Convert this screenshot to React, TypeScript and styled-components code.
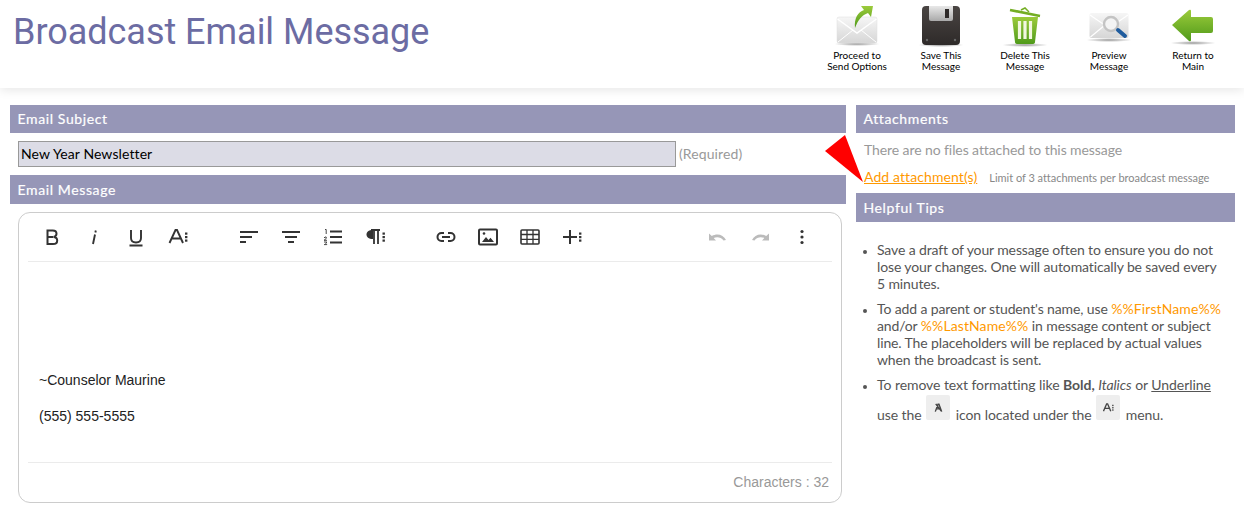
import React from "react";
import styled, { createGlobalStyle } from "styled-components";

const Global = createGlobalStyle`
  html, body { margin: 0; padding: 0; background: #fff; }
  body { font-family: "Lato", "Liberation Sans", sans-serif; }
  #root { height: 528px; overflow: hidden; }
`;
const Page = styled.div`position: relative; width: 1244px; height: 528px; overflow: hidden; background: #fff;`;
const Header = styled.header`
  height: 88px; display: flex; justify-content: space-between; align-items: flex-start;
  box-shadow: 0 2px 10px rgba(0,0,0,.1); padding-left: 13px; padding-right: 9px; box-sizing: border-box;
`;
const Title = styled.h1`
  margin: 9px 0 0; font: 400 36px/46px "Roboto", sans-serif; color: #6c6ca3; letter-spacing: -.03px;
`;
const Actions = styled.nav`display: flex; margin-top: 4px;`;
const Action = styled.div`
  width: 84px; display: flex; flex-direction: column; align-items: center;
  font-size: 10px; line-height: 11px; color: #000; text-align: center; white-space: pre-line;
  svg { display: block; width: 48px; height: 44px; margin-bottom: 2px; }
`;
const Columns = styled.main`
  display: grid; grid-template-columns: 836px 379px; column-gap: 10px; padding: 17px 0 0 10px;
`;
const Column = styled.section`display: flex; flex-direction: column;`;
const Bar = styled.h2<{ $h?: number }>`
  margin: 0; height: ${(p) => p.$h ?? 28}px; line-height: ${(p) => p.$h ?? 28}px;
  background: #9696b7; color: #fff; padding-left: 7.5px; font-size: 14px; font-weight: 400; letter-spacing: .62px;
  -webkit-text-stroke: .2px #fff;
`;
const SubjectRow = styled.div`display: flex; align-items: center; padding: 8px 0 8px 8px; gap: 3px;`;
const SubjectInput = styled.div`
  box-sizing: border-box; width: 658px; height: 26px; line-height: 24px; padding-left: 2px;
  background: #dcdce6; border: 1px solid #999; font-size: 14px; letter-spacing: .1px; color: #000;
`;
const Hint = styled.span`font-size: 14px; color: #999; letter-spacing: .1px; position: relative; top: -1px;`;
const Editor = styled.div`
  box-sizing: border-box; margin: 8px 4px 0 8px; height: 291px; border: 1px solid #ccc; border-radius: 12px;
  display: flex; flex-direction: column; background: #fff;
`;
const Toolbar = styled.div`
  box-sizing: border-box; height: 49px; margin: 0 9px; padding: 0 9px 0 3px; border-bottom: 1px solid #ebebeb;
  display: flex; align-items: center;
`;
const Group = styled.div`display: flex; margin-right: 29px; &:last-child { margin: 0 0 0 auto; }`;
const Tool = styled.span`
  width: 42px; height: 48px; display: flex; align-items: center; justify-content: center;
  svg { width: 24px; height: 24px; display: block; }
`;
const Body = styled.div`
  flex: 1; padding: 108px 20px 0; font: 14px/20px "Liberation Sans", Arial, sans-serif; color: #222;
  p { margin: 0 0 16px; }
`;
const Status = styled.div`
  box-sizing: border-box; height: 40px; margin: 0 9px; padding: 0 3px 2px 0; border-top: 1px solid #ebebeb;
  display: flex; align-items: center; justify-content: flex-end;
  font: 14px "Liberation Sans", Arial, sans-serif; color: #999;
`;
const Muted = styled.div`font-size: 14px; line-height: 17px; color: #999; padding: 8px 0 0 8px; letter-spacing: -.09px;`;
const LinkRow = styled.div`display: flex; align-items: baseline; padding: 10px 0 8px 8px;`;
const AddLink = styled.a`font-size: 14px; line-height: 17px; color: #f90; text-decoration: underline; letter-spacing: .1px;`;
const Limit = styled.span`font-size: 11px; color: #888; margin-left: 12px; letter-spacing: -.02px;`;
const Tips = styled.ul`
  margin: 0; padding: 19px 13px 0 21px; font-size: 14px; line-height: 17px; color: #555; letter-spacing: -.125px;
  li { margin-bottom: 8px; }
  li:last-child { letter-spacing: -.06px; }
  li::marker { font-size: 11px; }
  em.ph { font-style: normal; color: #f90; letter-spacing: .1px; }
  b { font-weight: 700; }
  u { text-decoration: underline; }
`;
const KeyIcon = styled.span`
  display: inline-flex; align-items: center; justify-content: center; width: 24px; height: 25px;
  margin: 0 2px 0 1px; background: #eee; border-radius: 2px; vertical-align: 7px;
  svg { width: 11px; height: 11px; }
`;
const LastLine = styled.span`display: block; margin-top: 2px;`;
const Pointer = styled.svg`position: absolute; left: 820px; top: 130px; width: 50px; height: 56px;`;

const I = { fill: "none", stroke: "#333", strokeWidth: 1.6 } as const;
const Dots = ({ x, c = "#333" }: { x: number; c?: string }) => (
  <g fill={c}>
    <rect x={x} y="7.500" width="2.400" height="2.200" /><rect x={x} y="11" width="2.400" height="2.200" /><rect x={x} y="14.500" width="2.400" height="2.200" />
  </g>
);
const Ic = ({ children }: { children: React.ReactNode }) => <Tool><svg viewBox="0 0 24 24">{children}</svg></Tool>;

const SmallA = ({ strike }: { strike?: boolean }) => (
  <svg viewBox="0 0 24 24">
    <path d={strike ? "M5 21 11 5h2l6 16M8 15h8M6 4l12 16" : "M1 20 8 4h2l7 16M4 14h10"} fill="none" stroke="#444" strokeWidth="3" />
    {!strike && <g fill="#444"><rect x="20" y="6" width="3" height="3" /><rect x="20" y="11" width="3" height="3" /><rect x="20" y="16" width="3" height="3" /></g>}
  </svg>
);

const Defs = () => (
  <svg width="0" height="0" style={{ position: "absolute" }}>
    <defs>
      <linearGradient id="env" x1="0" y1="0" x2="0" y2="1"><stop offset="0" stopColor="#f6f6f6" /><stop offset="1" stopColor="#d6d6d6" /></linearGradient>
      <linearGradient id="grn" x1="0" y1="0" x2="0" y2="1"><stop offset="0" stopColor="#9ccb3b" /><stop offset="1" stopColor="#4f9a1a" /></linearGradient>
      <linearGradient id="disk" x1="0" y1="0" x2="0" y2="1"><stop offset="0" stopColor="#4a4543" /><stop offset="1" stopColor="#2e2a29" /></linearGradient>
      <linearGradient id="shut" x1="0" y1="0" x2="0" y2="1"><stop offset="0" stopColor="#e8e8e8" /><stop offset="1" stopColor="#a9a9a9" /></linearGradient>
      <radialGradient id="shd"><stop offset="0" stopColor="#999" /><stop offset="1" stopColor="#999" stopOpacity="0" /></radialGradient>
    </defs>
  </svg>
);
const Shadow = ({ y = 41 }: { y?: number }) => <ellipse cx="24" cy={y} rx="23" ry="2" fill="url(#shd)" />;
const Envelope = () => (
  <g>
    <path d="M4 15Q4 13 6 13H42Q44 13 44 15V37Q44 39 42 39H6Q4 39 4 37Z" fill="url(#env)" stroke="#ddd" strokeWidth=".5" />
    <path d="M4.500 15 24 29 43.500 15" fill="none" stroke="#fff" strokeWidth="1.500" />
    <path d="M5 38 20 26M43 38 28 26" fill="none" stroke="#fff" strokeWidth="1" />
  </g>
);

export default function App() {
  return (
    <Page>
      <Global />
      <Defs />
      <Header>
        <Title>Broadcast Email Message</Title>
        <Actions>
          <Action>
            <svg viewBox="0 0 48 44"><Shadow y={40} /><Envelope />
              <path d="M22 24C21 14 25 8 31 6L28 2 40 2 38 13 35 9C29 11 25 16 22 24Z" fill="url(#grn)" /></svg>
            {"Proceed to\nSend Options"}
          </Action>
          <Action>
            <svg viewBox="0 0 48 44"><Shadow />
              <rect x="5" y="2" width="38" height="39" rx="4" fill="url(#disk)" />
              <path d="M12 2H36V15Q36 17 34 17H14Q12 17 12 15Z" fill="url(#shut)" />
              <rect x="28" y="5" width="4" height="9" fill="#2e2a29" />
              <circle cx="10" cy="36" r="1.200" fill="#666" /><circle cx="38" cy="36" r="1.200" fill="#666" /></svg>
            {"Save This\nMessage"}
          </Action>
          <Action>
            <svg viewBox="0 0 48 44"><Shadow />
              <path d="M11 13H37L34 38Q34 40 31 40H17Q14 40 14 38Z" fill="url(#grn)" />
              <path d="M18.500 17V35M24 17V35M29.500 17V35" stroke="#f2f7e0" strokeWidth="3.200" />
              <path d="M9 6 39 12" stroke="#74ae24" strokeWidth="2.600" />
              <path d="M20 6 24 4 28 8" fill="none" stroke="#74ae24" strokeWidth="1.500" /></svg>
            {"Delete This\nMessage"}
          </Action>
          <Action>
            <svg viewBox="0 0 48 44"><Shadow y={36} />
              <path d="M4.500 11Q4.500 9 6.500 9H41.500Q43.500 9 43.500 11V32Q43.500 34 41.500 34H6.500Q4.500 34 4.500 32Z" fill="url(#env)" />
              <path d="M5 11 24 24 43 11M5.500 33 20 21" fill="none" stroke="#fff" strokeWidth="1.200" />
              <circle cx="26" cy="20" r="7" fill="#f4f4f4" stroke="#c4c4c4" strokeWidth="2.400" />
              <path d="M33 26 40 32" stroke="#1f5c9e" strokeWidth="4" strokeLinecap="round" /></svg>
            {"Preview\nMessage"}
          </Action>
          <Action>
            <svg viewBox="0 0 48 44"><Shadow y={39} />
              <path d="M3 21 20 6Q22 5 22 7V13H42Q44 13 44 15V27Q44 29 42 29H22V36Q22 38 20 37Z" fill="url(#grn)" /></svg>
            {"Return to\nMain"}
          </Action>
        </Actions>
      </Header>
      <Columns>
        <Column>
          <Bar>Email Subject</Bar>
          <SubjectRow>
            <SubjectInput>New Year Newsletter</SubjectInput>
            <Hint>(Required)</Hint>
          </SubjectRow>
          <Bar $h={29}>Email Message</Bar>
          <Editor>
            <Toolbar>
              <Group>
                <Ic><path d="M7.500 5.500h5.300c2.200 0 3.700 1.300 3.700 3.300 0 1.600-1 2.800-3 3.100 2.300.2 3.700 1.500 3.700 3.500 0 2.200-1.700 3.600-4.200 3.600H7.500ZM7.500 12h5.500" {...I} strokeWidth={2} /></Ic>
                <Ic><path d="M13 9.500 11 19M13.800 5.500l-.4 2" {...I} strokeWidth={1.900} /></Ic>
                <Ic><path d="M7 5v8c0 3 2 4.500 5 4.500s5-1.500 5-4.500V5M5.500 20.500h13" {...I} strokeWidth={1.900} /></Ic>
                <Ic><path d="M3.500 18 9.500 5h1.500l6 13M5.800 13.500h9" {...I} strokeWidth={1.900} /><Dots x={19} /></Ic>
              </Group>
              <Group>
                <Ic><path d="M3 7h18M3 12h12M3 17h6" {...I} strokeWidth={2} /></Ic>
                <Ic><path d="M3 7h18M6 12h12M9 17h6" {...I} strokeWidth={2} /></Ic>
                <Ic><path d="M9 6.500h12M9 12h12M9 17.500h12" {...I} strokeWidth={2} /><path d="M4 4.500h1.200V9M3 13l1-1h1.200v1.500L3 15.300h3M3 17h2.800l-1 1.300 1 1.300H3" {...I} strokeWidth={.9} /></Ic>
                <Ic><path d="M8 5H17M11 5v14M15 5v14" {...I} strokeWidth={1.800} /><path d="M10 5C5.500 5 3.500 7 3.500 9.500s2 4.500 6.500 4.500Z" fill="#333" /><Dots x={19.500} /></Ic>
              </Group>
              <Group>
                <Ic><path d="M10 8H7.500a4 4 0 0 0 0 8H10M14 8h2.500a4 4 0 0 1 0 8H14M8 12h8" {...I} strokeWidth={2} /></Ic>
                <Ic><rect x="3" y="4.500" width="18" height="15" rx="1" {...I} strokeWidth={2} /><path d="M6 17l4-5 2.500 3 2-2.300L18 17Z" fill="#333" /><circle cx="8" cy="8.500" r="1.300" fill="#333" /></Ic>
                <Ic><rect x="3" y="5" width="18" height="14" rx="1" {...I} strokeWidth={1.600} /><path d="M3 9.500h18M3 14.300h18M9 5v14M15 5v14" {...I} strokeWidth={1.300} /></Ic>
                <Ic><path d="M3 12h14M10 5v14" {...I} strokeWidth={2} /><Dots x={19} /></Ic>
              </Group>
              <Group>
                <Ic><path d="M3 8.500v7h7l-2.300-2.400c3-1.600 7.500-1 9.800 2.400l2.500-.4C17.500 9.500 11 8 5.800 11Z" fill="#bbb" /></Ic>
                <Ic><path d="M21 8.500v7h-7l2.300-2.400c-3-1.600-7.500-1-9.800 2.400L4 15.100C6.500 9.500 13 8 18.200 11Z" fill="#bbb" /></Ic>
                <Ic><circle cx="12" cy="6.500" r="1.600" fill="#333" /><circle cx="12" cy="12" r="1.600" fill="#333" /><circle cx="12" cy="17.500" r="1.600" fill="#333" /></Ic>
              </Group>
            </Toolbar>
            <Body>
              <p>~Counselor Maurine</p>
              <p>(555) 555-5555</p>
            </Body>
            <Status>Characters : 32</Status>
          </Editor>
        </Column>
        <Column>
          <Bar>Attachments</Bar>
          <Muted>There are no files attached to this message</Muted>
          <LinkRow>
            <AddLink>Add attachment(s)</AddLink>
            <Limit>Limit of 3 attachments per broadcast message</Limit>
          </LinkRow>
          <Bar $h={29}>Helpful Tips</Bar>
          <Tips>
            <li>Save a draft of your message often to ensure you do not lose your changes. One will automatically be saved every 5 minutes.</li>
            <li>To add a parent or student's name, use <em className="ph">%%FirstName%%</em> and/or <em className="ph">%%LastName%%</em> in message content or subject line. The placeholders will be replaced by actual values when the broadcast is sent.</li>
            <li>
              To remove text formatting like <b>Bold,</b> <i>Italics</i> or <u>Underline</u>
              <LastLine>use the <KeyIcon><SmallA strike /></KeyIcon> icon located under the <KeyIcon><SmallA /></KeyIcon> menu.</LastLine>
            </li>
          </Tips>
        </Column>
      </Columns>
      <Pointer viewBox="0 0 50 56"><polygon points="5,21 25,5 43,52" fill="#f00" /></Pointer>
    </Page>
  );
}
